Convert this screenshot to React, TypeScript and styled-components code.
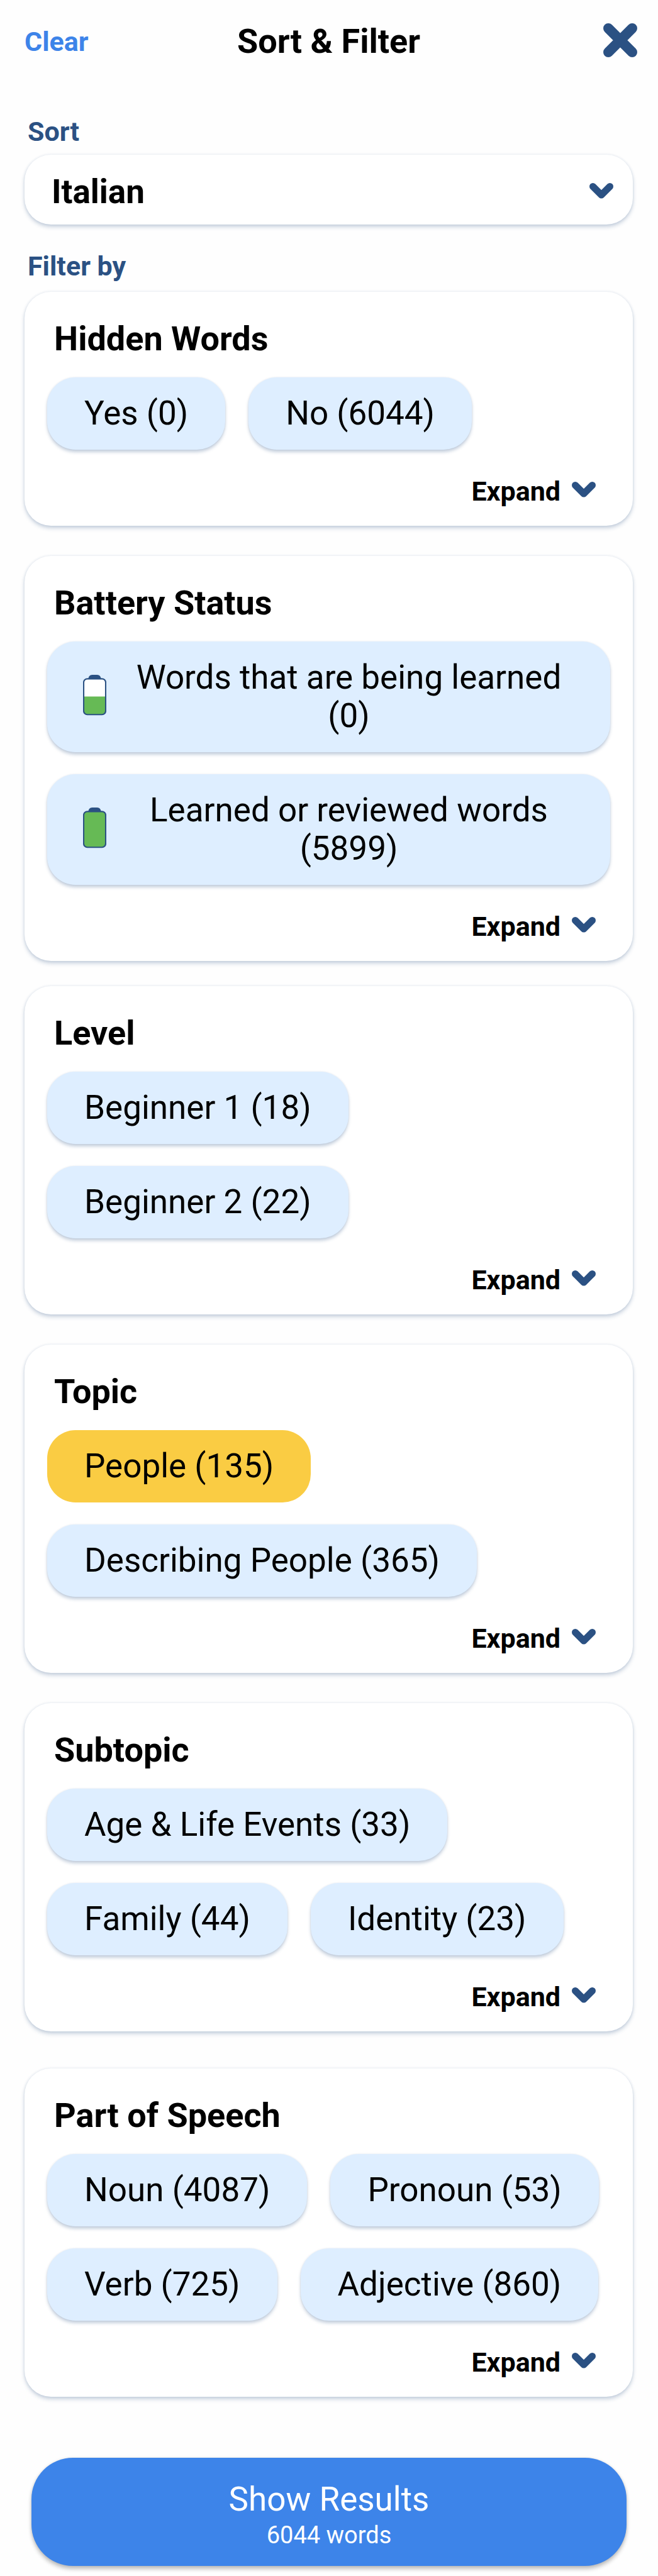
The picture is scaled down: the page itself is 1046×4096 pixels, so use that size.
import React, { useState } from "react";
import styled, { createGlobalStyle } from "styled-components";

const navy = "#2b5183";
const blue = "#3d84e9";

const GlobalStyle = createGlobalStyle`
  * { box-sizing: border-box; }
  body { margin: 0; background: #fefefe; color: #000; font-family: Roboto, "Noto Sans", sans-serif; }
  button, select { font-family: inherit; color: inherit; border: 0; margin: 0; padding: 0; background: none; cursor: pointer; }
  svg { display: block; flex: none; }
`;

const Page = styled.main`
  display: flex;
  flex-direction: column;
  padding: 0 40px 16px 39px;
`;

const Header = styled.header`
  display: grid;
  grid-template-columns: 1fr auto 1fr;
  align-items: center;
  height: 132px;
  margin-right: -7px;
  margin-left: -7px;
`;

const ClearButton = styled.button`
  justify-self: start;
  padding-left: 7px;
  font-size: 43px;
  line-height: 50px;
  font-weight: 700;
  color: ${blue};
`;

const PageTitle = styled.h1`
  margin: 0;
  font-size: 54px;
  line-height: 62px;
  font-weight: 700;
`;

const CloseButton = styled.button`
  justify-self: end;
  padding-bottom: 5px;
`;

const labelText = `
  display: block;
  margin: 0 0 0 5px;
  font-size: 43px;
  line-height: 50px;
  font-weight: 700;
  color: ${navy};
`;

const SortLabel = styled.label`
  ${labelText}
  padding-top: 52px;
`;

const FilterHeading = styled.h2`
  ${labelText}
  padding-top: 41px;
`;

const panel = `
  border-radius: 42px;
  background: #fff;
  box-shadow: 0 4px 6px rgba(43, 81, 131, 0.24), 0 0 4px rgba(43, 81, 131, 0.12);
`;

const SelectBox = styled.div`
  ${panel}
  display: grid;
  align-items: center;
  margin-top: 12px;
  & > * { grid-area: 1 / 1; }
  & > svg { justify-self: end; margin: 4px 31px 0 0; pointer-events: none; }
`;

const SortSelect = styled.select`
  appearance: none;
  width: 100%;
  height: 111px;
  padding: 6px 90px 0 43px;
  border-radius: 42px;
  font-size: 53px;
  font-weight: 700;
`;

const Card = styled.section<{ $gap: number }>`
  ${panel}
  margin-top: ${(p) => p.$gap}px;
  padding: 44px 36px 30px;
`;

const CardTitle = styled.h3`
  margin: 0 0 30px 11px;
  font-size: 54px;
  line-height: 62px;
  font-weight: 700;
`;

const Chips = styled.div`
  display: flex;
  flex-wrap: wrap;
  gap: 35px 37px;
`;

const Chip = styled.button<{ $wide?: boolean }>`
  display: flex;
  align-items: center;
  gap: 27px;
  width: ${(p) => (p.$wide ? "100%" : "auto")};
  padding: 27px ${(p) => (p.$wide ? 57 : 59)}px;
  border-radius: 45px;
  background: #deeeff;
  font-size: 53px;
  line-height: 61px;
  box-shadow: 0 4px 5px rgba(43, 81, 131, 0.26), 0 0 3px rgba(43, 81, 131, 0.1);
  &[aria-pressed="true"] { background: #facc43; box-shadow: none; }
`;

const ChipText = styled.span`
  flex: 1;
  text-align: center;
`;

const ExpandButton = styled.button`
  display: flex;
  align-items: center;
  gap: 18px;
  margin: 41px 23px 0 auto;
  font-size: 43px;
  line-height: 50px;
  font-weight: 700;
  & > svg { margin-bottom: 6px; }
`;

const ResultsButton = styled.button`
  display: flex;
  flex-direction: column;
  align-items: center;
  gap: 4px;
  margin: 97px 10px 0 11px;
  padding: 35px 40px 27px;
  border-radius: 66px;
  background: ${blue};
  color: #fff;
  font-size: 53px;
  line-height: 62px;
  box-shadow: 0 5px 6px rgba(0, 0, 0, 0.24), 0 0 4px rgba(0, 0, 0, 0.1);
`;

const ResultsCount = styled.span`
  font-size: 38px;
  line-height: 44px;
`;

const CloseIcon = () => (
  <svg width="54" height="54" viewBox="0 0 54 54" aria-hidden="true">
    <path d="M8 8L46 46M46 8L8 46" stroke={navy} strokeWidth="16" strokeLinecap="round" />
  </svg>
);

const Chevron = () => (
  <svg width="38" height="25" viewBox="0 0 38 25" aria-hidden="true">
    <path d="M5.5 5.5L19 19L32.5 5.5" fill="none" stroke={navy} strokeWidth="11" strokeLinecap="round" strokeLinejoin="round" />
  </svg>
);

const Battery = ({ level }: { level: number }) => (
  <svg width="37" height="70" viewBox="0 0 38 72" aria-hidden="true">
    <path d="M8.500 8C8.500 3 11 0 15 0H23C27 0 29.500 3 29.500 8Z" fill={navy} />
    <rect x="1" y="6.500" width="36" height="58.500" rx="6" fill="#fff" />
    <path
      d={level === 1 ? "M7 6.500H31Q37 6.500 37 12.500V59Q37 65 31 65H7Q1 65 1 59V12.500Q1 6.500 7 6.500Z" : "M1 35.500H37V59Q37 65 31 65H7Q1 65 1 59Z"}
      fill="#66ba55"
    />
    <rect x="1" y="6.500" width="36" height="58.500" rx="6" fill="none" stroke={navy} strokeWidth="2.200" />
  </svg>
);

type Option = { name: string; count: number; battery?: number };
type Group = { title: string; gap: number; options: Option[] };

const groups: Group[] = [
  { title: "Hidden Words", gap: 16, options: [{ name: "Yes", count: 0 }, { name: "No", count: 6044 }] },
  {
    title: "Battery Status",
    gap: 48,
    options: [
      { name: "Words that are being learned", count: 0, battery: 0.5 },
      { name: "Learned or reviewed words", count: 5899, battery: 1 },
    ],
  },
  { title: "Level", gap: 40, options: [{ name: "Beginner 1", count: 18 }, { name: "Beginner 2", count: 22 }] },
  { title: "Topic", gap: 48, options: [{ name: "People", count: 135 }, { name: "Describing People", count: 365 }] },
  {
    title: "Subtopic",
    gap: 48,
    options: [{ name: "Age & Life Events", count: 33 }, { name: "Family", count: 44 }, { name: "Identity", count: 23 }],
  },
  {
    title: "Part of Speech",
    gap: 59,
    options: [
      { name: "Noun", count: 4087 },
      { name: "Pronoun", count: 53 },
      { name: "Verb", count: 725 },
      { name: "Adjective", count: 860 },
    ],
  },
];

export default function App() {
  const [selected, setSelected] = useState<string[]>(["People"]);
  const toggle = (name: string) =>
    setSelected((s) => (s.includes(name) ? s.filter((n) => n !== name) : [...s, name]));

  return (
    <>
      <GlobalStyle />
      <Page>
        <Header>
          <ClearButton type="button" onClick={() => setSelected([])}>Clear</ClearButton>
          <PageTitle>Sort &amp; Filter</PageTitle>
          <CloseButton type="button" aria-label="Close"><CloseIcon /></CloseButton>
        </Header>
        <SortLabel htmlFor="sort">Sort</SortLabel>
        <SelectBox>
          <SortSelect id="sort" defaultValue="Italian">
            <option>Italian</option>
          </SortSelect>
          <Chevron />
        </SelectBox>
        <FilterHeading>Filter by</FilterHeading>
        {groups.map((group) => (
          <Card key={group.title} $gap={group.gap}>
            <CardTitle>{group.title}</CardTitle>
            <Chips>
              {group.options.map((o) => (
                <Chip
                  key={o.name}
                  type="button"
                  $wide={o.battery !== undefined}
                  aria-pressed={selected.includes(o.name)}
                  onClick={() => toggle(o.name)}
                >
                  {o.battery !== undefined && <Battery level={o.battery} />}
                  <ChipText>{`${o.name} (${o.count})`}</ChipText>
                </Chip>
              ))}
            </Chips>
            <ExpandButton type="button">Expand<Chevron /></ExpandButton>
          </Card>
        ))}
        <ResultsButton type="button">
          Show Results
          <ResultsCount>6044 words</ResultsCount>
        </ResultsButton>
      </Page>
    </>
  );
}
